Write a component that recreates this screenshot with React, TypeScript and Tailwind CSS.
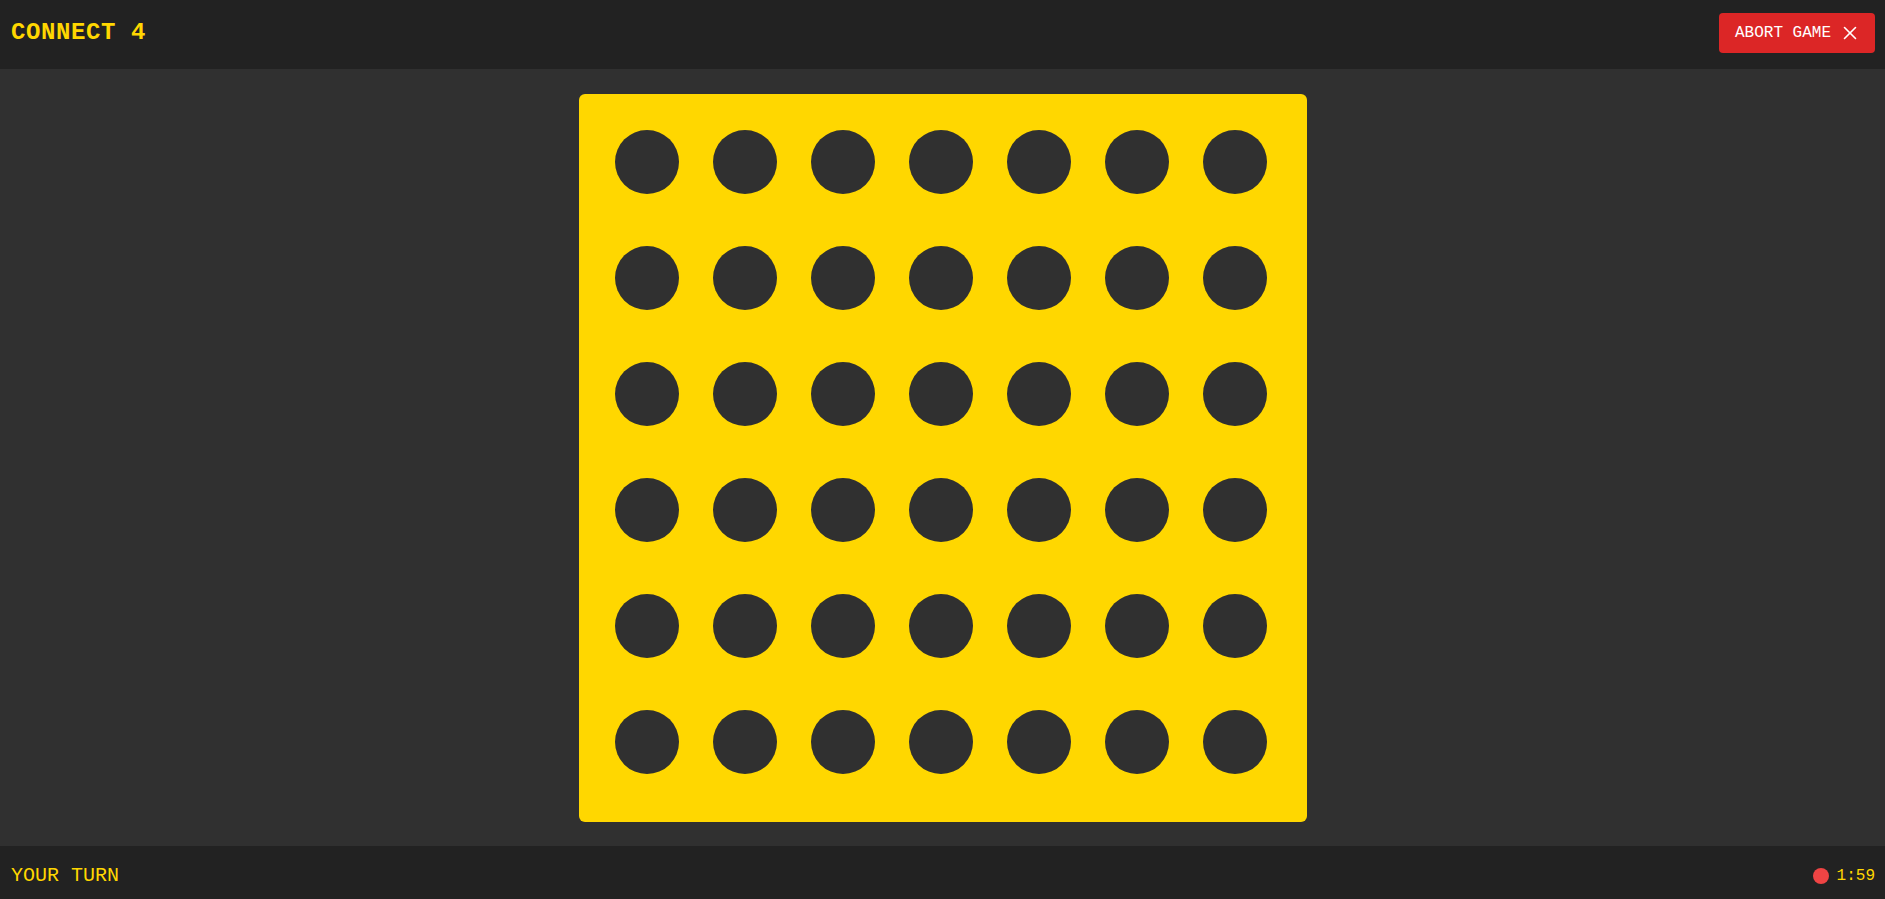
import { X } from "lucide-react";

const ROWS = 6;
const COLS = 7;

export default function App() {
    const cells = Array.from({ length: ROWS * COLS }, (_, i) => i);

    return (
        <div className="flex flex-col h-screen bg-[#303030] font-['Liberation_Mono',monospace]">
            <header className="flex items-center justify-between h-[69px] pl-[11px] pr-2.5 pb-[3px] bg-[#222222]">
                <h1 className="text-2xl font-bold tracking-wide text-[#FFD700]">CONNECT 4</h1>
                <button
                    type="button"
                    className="flex items-center gap-2 h-10 pl-4 pr-[14px] rounded bg-[#DC2626] text-white text-base"
                >
                    <span>ABORT GAME</span>
                    <X size={22} strokeWidth={1.75} />
                </button>
            </header>

            <main className="flex-1 flex items-center justify-center">
                <div className="bg-[#FFD700] rounded-md pt-9 pl-9 pr-10 pb-12">
                    <div className="grid grid-cols-[repeat(7,64px)] gap-x-[34px] gap-y-[52px]">
                        {cells.map((i) => (
                            <div key={i} className="w-16 h-16 rounded-full bg-[#303030]" />
                        ))}
                    </div>
                </div>
            </main>

            <footer className="flex items-center justify-between h-[53px] pl-[11px] pr-2.5 pt-1.5 bg-[#222222]">
                <p className="text-xl text-[#FFD700]">YOUR TURN</p>
                <div className="flex items-center gap-2">
                    <span className="w-4 h-4 rounded-full bg-[#EF4444]" />
                    <span className="text-base text-[#FFD700]">1:59</span>
                </div>
            </footer>
        </div>
    );
}
